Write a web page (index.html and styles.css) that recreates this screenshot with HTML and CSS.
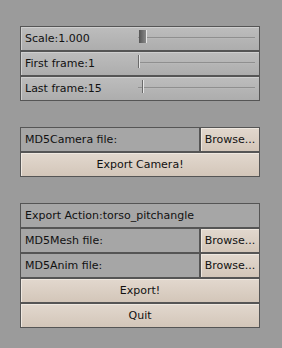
FILE: index.html
```html
<!DOCTYPE html>
<html lang="en">
<head>
  <meta charset="UTF-8" />
  <title>MD5 Export</title>
  <link rel="stylesheet" href="styles.css">
</head>
<body>
  <div class="panel">
    <div class="group">
      <div class="row slider">
        <span class="label">Scale:1.000</span>
        <div class="track"><div class="knob wide" style="left:1px"></div></div>
      </div>
      <div class="row slider">
        <span class="label">First frame:1</span>
        <div class="track"><div class="knob" style="left:0px"></div></div>
      </div>
      <div class="row slider">
        <span class="label">Last frame:15</span>
        <div class="track"><div class="knob" style="left:4px"></div></div>
      </div>
    </div>

    <div class="group">
      <div class="line">
        <div class="row field">MD5Camera file:</div>
        <button class="row btn browse">Browse...</button>
      </div>
      <button class="row btn">Export Camera!</button>
    </div>

    <div class="group">
      <div class="row field">Export Action:torso_pitchangle</div>
      <div class="line">
        <div class="row field">MD5Mesh file:</div>
        <button class="row btn browse">Browse...</button>
      </div>
      <div class="line">
        <div class="row field">MD5Anim file:</div>
        <button class="row btn browse">Browse...</button>
      </div>
      <button class="row btn">Export!</button>
      <button class="row btn">Quit</button>
    </div>
  </div>
</body>
</html>
```

FILE: styles.css
```css
html, body {
  margin: 0;
  background: #9b9b9b;
}
body {
  font-family: 'DejaVu Sans', sans-serif;
  font-size: 11px;
  color: #111;
}
.panel {
  width: 240px;
  margin: 26px 0 0 20px;
}
.group + .group {
  margin-top: 26px;
}
.row {
  box-sizing: border-box;
  height: 25px;
  width: 100%;
  border: 1px solid #555;
  display: flex;
  align-items: center;
  padding: 0 4px;
  margin: 0;
  font: inherit;
  color: inherit;
}
.slider {
  background: linear-gradient(#bdbdbd, #adadad);
  box-shadow: inset 1px 1px 0 #cfcfcf;
}
.slider .label {
  width: 113px;
  flex: none;
}
.track {
  position: relative;
  flex: 1;
  height: 100%;
}
.track::before {
  content: "";
  position: absolute;
  left: 0;
  right: 0;
  top: 10px;
  height: 1px;
  background: #8f8f8f;
  border-bottom: 1px solid #b8b8b8;
}
.knob {
  position: absolute;
  top: 3px;
  width: 1px;
  height: 13px;
  background: #6a6a6a;
  border-right: 1px solid #e6e6e6;
}
.knob.wide {
  width: 7px;
  background: linear-gradient(90deg, #555, #888);
}
.field {
  background: #a6a6a6;
}
.line {
  display: flex;
}
.line .field {
  flex: 1;
}
.btn {
  justify-content: center;
  background: linear-gradient(#e2d8ce, #d3c6b9);
  box-shadow: inset 1px 1px 0 #efe8e0;
  cursor: pointer;
}
.browse {
  width: 60px;
  flex: none;
  padding: 0;
}
```
